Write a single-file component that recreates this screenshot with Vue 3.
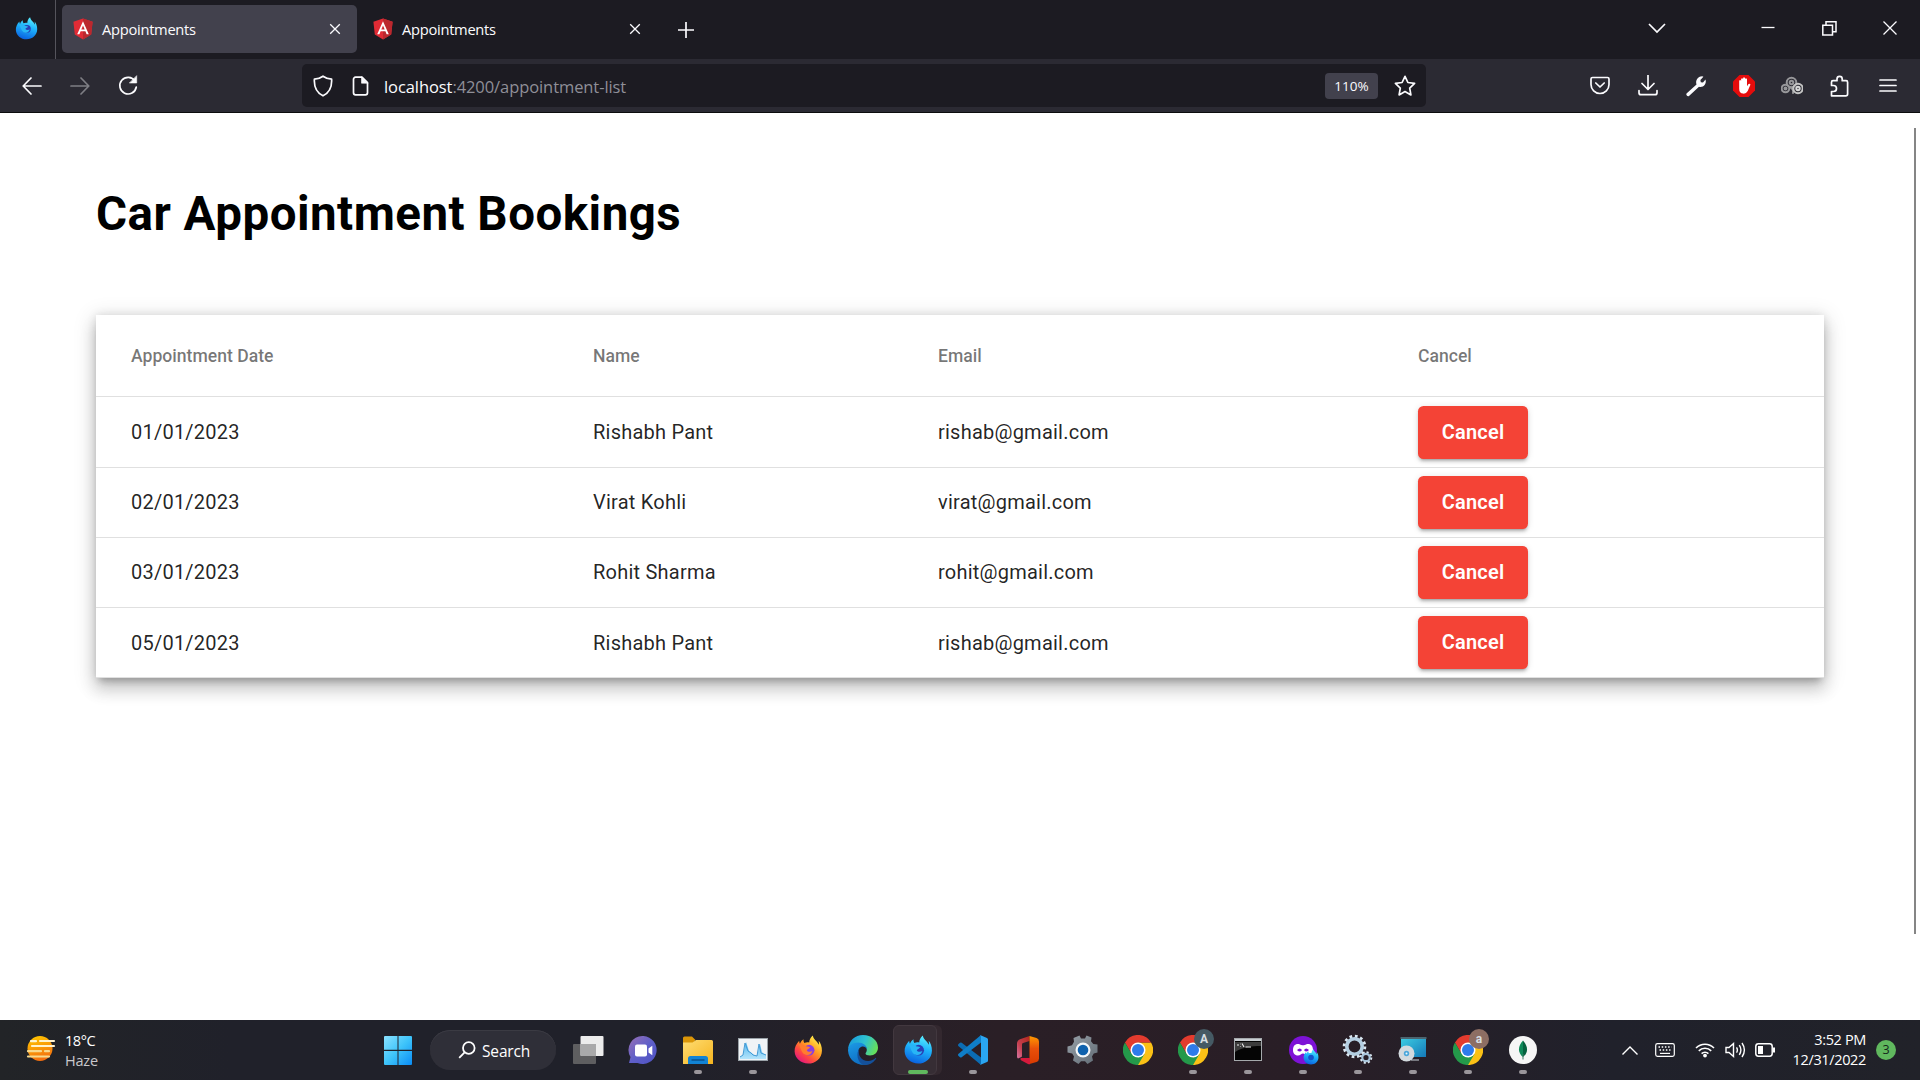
<script setup>
const tabs = [
  { title: 'Appointments', active: true },
  { title: 'Appointments', active: false },
]
const columns = ['Appointment Date', 'Name', 'Email', 'Cancel']
const bookings = [
  { date: '01/01/2023', name: 'Rishabh Pant', email: 'rishab@gmail.com' },
  { date: '02/01/2023', name: 'Virat Kohli', email: 'virat@gmail.com' },
  { date: '03/01/2023', name: 'Rohit Sharma', email: 'rohit@gmail.com' },
  { date: '05/01/2023', name: 'Rishabh Pant', email: 'rishab@gmail.com' },
]
</script>

<template>
  <div class="screen">
    <!-- shared gradients and symbols -->
    <svg class="defs" width="0" height="0" aria-hidden="true">
      <defs>
        <linearGradient id="ffb" x1="0.7" y1="0" x2="0.4" y2="1"><stop offset="0" stop-color="#5cf0ff" /><stop offset=".45" stop-color="#1fb4fb" /><stop offset="1" stop-color="#0a62e0" /></linearGradient>
        <linearGradient id="ffo" x1="0.85" y1="0.1" x2="0.2" y2="0.95"><stop offset="0" stop-color="#fff04a" /><stop offset=".4" stop-color="#ff9a22" /><stop offset=".7" stop-color="#ff4a40" /><stop offset="1" stop-color="#e3157f" /></linearGradient>
        <linearGradient id="win" x1="0" y1="0" x2="1" y2="1"><stop offset="0" stop-color="#8be2ff" /><stop offset=".5" stop-color="#3ec4fa" /><stop offset="1" stop-color="#0a8cf5" /></linearGradient>
        <linearGradient id="sun" x1="0.3" y1="0" x2="0.6" y2="1"><stop offset="0" stop-color="#ffc400" /><stop offset="1" stop-color="#f26a10" /></linearGradient>
        <linearGradient id="chat" x1="0" y1="0" x2="1" y2="1"><stop offset="0" stop-color="#9a70b4" /><stop offset=".5" stop-color="#5f5fc9" /><stop offset="1" stop-color="#4d52c4" /></linearGradient>
        <linearGradient id="fold" x1="0" y1="0" x2="1" y2="1"><stop offset="0" stop-color="#ffdd73" /><stop offset="1" stop-color="#f5b41f" /></linearGradient>
        <linearGradient id="edgeg" x1="0" y1="0.2" x2="1" y2="0.5"><stop offset="0" stop-color="#1799e0" /><stop offset=".55" stop-color="#2fc2cf" /><stop offset="1" stop-color="#66e05a" /></linearGradient>
        <linearGradient id="edgeb" x1="0" y1="0" x2="0.4" y2="1"><stop offset="0" stop-color="#1c9be6" /><stop offset="1" stop-color="#0f6fc4" /></linearGradient>
        <linearGradient id="off" x1="1" y1="0" x2="0" y2="1"><stop offset="0" stop-color="#b3261c" /><stop offset=".6" stop-color="#c7404f" /><stop offset="1" stop-color="#d777a5" /></linearGradient>
        <linearGradient id="offr" x1="0" y1="0" x2="0" y2="1"><stop offset="0" stop-color="#ff9a00" /><stop offset=".45" stop-color="#e8500a" /><stop offset="1" stop-color="#d83b01" /></linearGradient>
        <linearGradient id="tv" x1="0" y1="0" x2="1" y2="1"><stop offset="0" stop-color="#3fd0e4" /><stop offset="1" stop-color="#1479b8" /></linearGradient>
        <linearGradient id="cog" x1="0" y1="0" x2="1" y2="1"><stop offset="0" stop-color="#97a0a8" /><stop offset="1" stop-color="#616b74" /></linearGradient>
        <linearGradient id="perf" x1="0" y1="0" x2="0" y2="1"><stop offset="0" stop-color="#4cb4ee" /><stop offset="1" stop-color="#b4e4fb" /></linearGradient>
        <symbol id="fox" viewBox="0 0 32 32">
          <path d="M21 .5c-2.500 1.800-3.800 4.800-3.900 7.700-2-.4-3.700-.2-5.300.5C11 7.300 10.600 5.900 10.800 4.500 9 5.700 7.800 7.400 7 9.600 6.400 8.500 6.100 7.300 6.200 6.200 3 9.500 1 13.500 1.200 18 1.600 25.500 8 31 16 31s14.800-5.700 14.900-14c.1-4.500-1.500-8.700-3.600-10.800.4 1.400.5 3.200.2 4.500C25.800 6.500 21.700 5 21 .5z" />
        </symbol>
        <symbol id="chrome" viewBox="0 0 32 32">
          <path d="M16 16V8h13.860A16 16 0 0 1 16 32z" fill="#fbc116" />
          <path d="M2.140 8A16 16 0 0 1 29.860 8H16L9 20z" fill="#e33b2e" />
          <path d="M2.140 8l7 12L16 24l7-4-7 12A16 16 0 0 1 2.140 8z" fill="#24994a" />
          <circle cx="16" cy="16" r="8" fill="#fff" /><circle cx="16" cy="16" r="6.400" fill="#2f7bea" />
        </symbol>
        <symbol id="angular" viewBox="0 0 20 22">
          <path d="M10 .5 19.600 3.800 18.200 16.600 10 21.500 1.800 16.600.4 3.800z" fill="#e02b35" />
          <path d="M10 .5 19.600 3.800 18.200 16.600 10 21.500z" fill="#bb282e" />
          <path d="M10 3.200 4.200 16.300h2.200l1.200-3h4.800l1.200 3h2.200zm0 4.200 1.700 4.100H8.300z" fill="#fff" fill-rule="evenodd" />
        </symbol>
      </defs>
    </svg>

    <header class="tabbar">
      <div class="ffview">
        <svg width="23" height="23" viewBox="0 0 32 32"><use href="#fox" fill="url(#ffb)" /><circle cx="16.500" cy="16.500" r="5.500" fill="#2a3fb4" /><path d="M6 10c4 .3 6 1 8.500 2.500 1.500 0 3 .2 3.500 1-1 1.500-3 1.500-3.500 3 .5 2 4 2 6 1-1 3.500-4 5-7 4-4-1-5-5-7.500-11.500z" fill="#28b6f6" /></svg>
      </div>
      <div v-for="(tab, i) in tabs" :key="i" class="tab" :class="{ active: tab.active }">
        <svg class="favicon" width="20" height="22"><use href="#angular" /></svg>
        <span class="tabtitle">{{ tab.title }}</span>
        <svg class="close" width="12" height="12" viewBox="0 0 12 12"><path d="M1.200 1.200l9.600 9.600M10.800 1.200l-9.600 9.600" /></svg>
      </div>
      <svg class="plus" width="16" height="16" viewBox="0 0 16 16"><path d="M8 0v16M0 8h16" /></svg>
      <div class="winctl">
        <svg width="18" height="12" viewBox="0 0 18 12"><path d="M1 2l8 8 8-8" stroke-width="1.700" /></svg>
        <svg class="min" width="14" height="14" viewBox="0 0 14 14"><path d="M0.500 6.500h13" /></svg>
        <svg class="res" width="15" height="15" viewBox="0 0 15 15"><path d="M.8 4.200h9.700v9.700H.8zM4 4V.8h10v10h-3.500" stroke-width="1.500" /></svg>
        <svg width="14" height="14" viewBox="0 0 14 14"><path d="M.5.5l13 13M13.500.5l-13 13" stroke-width="1.300" /></svg>
      </div>
    </header>

    <nav class="toolbar">
      <svg class="back" width="20" height="18" viewBox="0 0 20 18"><path d="M19 9H1.500M9 1L1.200 9 9 17" /></svg>
      <svg class="fwd" width="20" height="18" viewBox="0 0 20 18"><path d="M1 9h17.500M11 1l7.800 8-7.800 8" /></svg>
      <svg class="reload" width="20" height="21" viewBox="0 0 20 21"><path d="M17 6A8.300 8.300 0 1 0 18.300 12" /><path d="M18.700 1v7h-7z" class="solid" /></svg>
      <div class="urlbar">
        <svg class="shield" width="20" height="22" viewBox="0 0 20 22"><path d="M10 1.200c2.600 1.900 5.600 2.800 8.600 2.900.5 7.500-2.600 13.700-8.600 16.700C4 17.800.9 11.600 1.400 4.100 4.400 4 7.400 3.100 10 1.200z" /></svg>
        <svg class="doc" width="17" height="20" viewBox="0 0 17 20"><path d="M1.500 3.200a2 2 0 0 1 2-2H10L15.500 6.700v10.100a2 2 0 0 1-2 2h-10a2 2 0 0 1-2-2z" /><path d="M9.500 1v6.200h6.200z" class="solid" /></svg>
        <span class="url">localhost<span class="dim">:4200/appointment-list</span></span>
        <span class="zoom">110%</span>
        <svg class="star" width="22" height="22" viewBox="0 0 22 22"><path d="M11 1.300l2.900 6.200 6.700.9-4.900 4.700 1.200 6.800L11 16.600l-5.900 3.300 1.200-6.800L1.400 8.400l6.700-.9z" /></svg>
      </div>
      <div class="actions">
        <svg viewBox="0 0 22 22"><path d="M3.500 2.500h15a1.500 1.500 0 0 1 1.500 1.500v5.500a9 9 0 0 1-18 0V4a1.500 1.500 0 0 1 1.500-1.500zM6.800 8l4.200 4 4.200-4" /></svg>
        <svg viewBox="0 0 22 22"><path d="M11 0v14M5 8.500l6 6 6-6M2 15.500v2.200a2 2 0 0 0 2 2h14a2 2 0 0 0 2-2v-2.200" /></svg>
        <svg viewBox="0 0 22 22"><path class="wrench" d="M1.500 18.500 11.500 9.500C10.300 5.500 12.500 1.500 17.200 1.300l1.200.4-3 3.300.4 2.200 2.200.4 2.500-3.200c1.500 4.500-2.300 8.400-6.500 7.300L4 21c-1.300.9-3.400-1-2.500-2.500z" /></svg>
        <svg viewBox="0 0 22 22"><path d="M6.500 0h9L22 6.500v9L15.500 22h-9L0 15.500v-9z" fill="#e50c0c" stroke="none" /><path d="M6.200 9V5.700q.8-1.500 1.900 0V3.900q.9-1.500 2 0V3q.9-1.500 1.900 0v1q.9-1.500 2 0v7.200l1.500-2.300q1.800-.7 1.900.8l-2.700 6.300q-1.500 2.900-4.600 2.600-3.900-.3-3.900-4.900z" fill="#fff" stroke="none" /></svg>
        <svg viewBox="0 0 22 22" class="rings"><circle cx="4.500" cy="13.500" r="3.800" /><circle cx="4.500" cy="13.500" r="1" /><circle cx="10.500" cy="7.500" r="4.800" /><circle cx="10.500" cy="7.500" r="1.800" /><path d="M9 12q4 2 3 6" /><circle cx="17" cy="13.500" r="4.700" stroke="#c4c4c4" /><circle cx="17" cy="13.500" r="1.700" stroke="#d8d8d8" /></svg>
        <svg viewBox="0 0 22 22"><path d="M2.500 10.500V7.200a1.500 1.500 0 0 1 1.500-1.500h4V4a2.600 2.600 0 0 1 5.200 0v1.700h3.900a1.500 1.500 0 0 1 1.500 1.500V19a1.800 1.800 0 0 1-1.800 1.800H2.500v-4.300h2a3 3 0 0 0 0-6z" /></svg>
        <svg viewBox="0 0 22 22"><path d="M3 5h16M3 10.500h16M3 16h16" /></svg>
      </div>
    </nav>

    <main class="page">
      <h1>Car Appointment Bookings</h1>
      <section class="card">
        <div class="row head">
          <span v-for="c in columns" :key="c">{{ c }}</span>
        </div>
        <div v-for="b in bookings" :key="b.date" class="row">
          <span>{{ b.date }}</span>
          <span>{{ b.name }}</span>
          <span>{{ b.email }}</span>
          <span class="action"><button type="button">Cancel</button></span>
        </div>
      </section>
      <div class="scrollbar"></div>
    </main>

    <footer class="taskbar">
      <div class="weather">
        <svg width="30" height="28" viewBox="0 0 30 28"><circle cx="14" cy="13.500" r="12.500" fill="url(#sun)" /><path d="M5 6.200h5M14 6h14M6 11h22" stroke="#fff3cf" stroke-width="2.200" stroke-linecap="round" /><path d="M2 16.200h13M19 16.200h4M2 21.500h21" stroke="#f8d98c" stroke-width="2.200" stroke-linecap="round" /></svg>
        <div class="wtext"><span>18°C</span><span class="haze">Haze</span></div>
      </div>

      <svg class="start" width="28" height="29" viewBox="0 0 28 29"><path d="M1 0h12.500v13.800H0V1a1 1 0 0 1 1-1zM14.500 0H27a1 1 0 0 1 1 1v12.800H14.500zM0 15h13.500v14H1a1 1 0 0 1-1-1zM14.500 15H28v13a1 1 0 0 1-1 1H14.500z" fill="url(#win)" /></svg>
      <div class="search">
        <svg width="18" height="18" viewBox="0 0 18 18"><circle cx="10.800" cy="7" r="5.800" /><path d="M6.600 11.300L1.200 16.800" /></svg>
        <span>Search</span>
      </div>

      <div class="apps">
        <div class="app"><svg viewBox="0 0 32 32"><rect x="1" y="10" width="23" height="20" rx="1" fill="#5e5e60" /><rect x="8.500" y="2" width="23" height="20" rx="1" fill="#ececec" /><path d="M8.500 10H24v12H9.500a1 1 0 0 1-1-1z" fill="#a9a9aa" /></svg></div>
        <div class="app"><svg viewBox="0 0 32 32"><path d="M16.500 2a14 14 0 1 1-6 27H2l1.500-6A14 14 0 0 1 16.500 2z" fill="url(#chat)" /><rect x="8" y="10.500" width="12" height="12" rx="2" fill="#fff" /><path d="M21.500 14.500l3.800-2.700v9.400l-3.800-2.700z" fill="#fff" /></svg></div>
        <div class="app run"><svg viewBox="0 0 32 32"><path d="M1 4a1.500 1.500 0 0 1 1.500-1.500H10L13.500 6l-3 4H1z" fill="#db9608" /><path d="M1 8.500h9.500L14 6h15.500A1.500 1.500 0 0 1 31 7.500V30H1z" fill="url(#fold)" /><path d="M6 30v-5.500A2.500 2.500 0 0 1 8.500 22h15a2.500 2.500 0 0 1 2.500 2.500V30z" fill="#1283d4" /><path d="M9.500 26h13" stroke="#0a508c" stroke-width="1.500" /></svg></div>
        <div class="app run"><svg viewBox="0 0 32 32"><rect x="1.500" y="4.500" width="29" height="22" fill="#f0f3f6" stroke="#9aa2a8" /><path d="M3 25v-2l3-2 3-13 3 9 3 2 2 2 3 1 3-12 2 8 2 2 2 1v4z" fill="url(#perf)" /><path d="M3 23l3-2 2-12 3 8 3 2 2 2 4 1 2-12 2 9 5 2" fill="none" stroke="#4199d4" /></svg></div>
        <div class="app"><svg viewBox="0 0 32 32"><g transform="translate(1.500 1) scale(.92)"><use href="#fox" width="32" height="32" fill="url(#ffo)" /><circle cx="17" cy="16.500" r="5.800" fill="#8a3fe0" /><path d="M6 10c4 .3 6 1 8.500 2.500 1.500 0 3 .2 3.500 1-1 1.500-3 1.500-3.500 3 .5 2 4 2 6 1-1 3.500-4 5-7 4-4-1-5-5-7.500-11.500z" fill="#ff7d2e" /></g></svg></div>
        <div class="app"><svg viewBox="0 0 32 32"><path d="M1 15C2 6.500 8 1 16 1c8.500 0 15 5.500 15 12.500 0 5-3.700 8-8 8-3 0-4.500-1-4.500-2 0-.8 1.300-1.500 1.300-3.800 0-3.500-3.400-5.700-7.300-5.700C7 10 2.500 12 1 15z" fill="url(#edgeg)" /><path d="M1 16.500C1 11.500 5.500 8.500 11 8.500c5 0 9 3 9 7 0 0-1-3-4-3-3.500 0-5.500 3.500-4.500 8 1 5 5 9 9.500 9.500A15 15 0 0 1 1 16.500z" fill="url(#edgeb)" /><path d="M12.500 14.500c-3 6.500 3 13.500 9.500 12.500 3-.4 5.500-1.800 6.800-3.300.7.200.4 1-.3 1.800C25.500 29.500 21 31.500 17 31 10.500 29.500 8.500 19 12.500 14.500z" fill="#14509a" /></svg></div>
        <div class="app current"><svg viewBox="0 0 32 32"><g transform="translate(1.500 1) scale(.92)"><use href="#fox" width="32" height="32" fill="url(#ffb)" /><circle cx="16.500" cy="16.500" r="5.800" fill="#2a3fb4" /><path d="M6 10c4 .3 6 1 8.500 2.500 1.500 0 3 .2 3.500 1-1 1.500-3 1.500-3.500 3 .5 2 4 2 6 1-1 3.500-4 5-7 4-4-1-5-5-7.500-11.500z" fill="#28b6f6" /></g></svg></div>
        <div class="app run"><svg viewBox="0 0 32 32"><path d="M1.300 10.300 3 8.800q.8-.6 1.700 0L24 23.500V31L1.300 11.900q-.7-.8 0-1.600z" fill="#0b6cb3" /><path d="M1.300 21.700 3 23.200q.8.600 1.700 0L24 8.500V1L1.300 20.100q-.7.800 0 1.600z" fill="#0f7ec8" /><path d="M23 1l7 3q1 .5 1 1.500v21q0 1-1 1.500l-7 3q1-.5 1-2V3q0-1.500-1-2z" fill="#2aa6f2" /></svg></div>
        <div class="app"><svg viewBox="0 0 32 32"><path d="M17.500 2 8 5.200Q5 6.500 5 9.500v13q0 1.500 1 2l3.500-1.500q.5-.4.500-1.500V10.500q0-1.200 1-1.600L17.500 7z" fill="url(#off)" /><path d="M17.500 2l7 2q2.500.8 2.500 3.500v17q0 2.500-2.500 3.500l-7 2z" fill="url(#offr)" /><path d="M9 24h9v6.200q-1 .2-2-.3L9 26.200q-1.500-1.500 0-2.200z" fill="#d61a3c" /></svg></div>
        <div class="app"><svg viewBox="0 0 32 32"><path d="M12.500 1.500 14 4.500h4l1.500-3 5 2-.5 3.800 2.300 2.700 4.200.5v8l-3.700.9-1.800 3.100 1 4-5.500 3.500L18 27.300h-4L11.500 30 6 26.500l1-4-1.800-3.100-4.700-1v-5.800L5 11.300l2-3.500-.5-3.800z" fill="url(#cog)" /><circle cx="16" cy="16" r="7.500" fill="#f4f7f9" /><circle cx="16" cy="16" r="5.300" fill="#0f62ae" /></svg></div>
        <div class="app"><svg viewBox="-1 -1 34 34"><use href="#chrome" width="32" height="32" /></svg></div>
        <div class="app run"><svg viewBox="-1 -1 34 34"><use href="#chrome" width="32" height="32" /></svg><span class="badge slate">A</span></div>
        <div class="app run"><svg viewBox="0 0 32 32"><rect x="2.500" y="4.500" width="27" height="22" fill="#050505" stroke="#a5a9ac" /><path d="M3 5h26v2H3z" fill="#c9ced2" /><path d="M3 8h26v4c-10 0-18 1-26 6z" fill="#3c3c3c" /><path d="M5 11h2M8.500 9.800v.5M8.500 12.500v.5M10 9.500l2 3.500M13.500 13H19" stroke="#eee" stroke-width="1.100" /></svg></div>
        <div class="app run"><svg viewBox="0 0 32 32"><circle cx="16" cy="16" r="14" fill="#7d12d6" /><path d="M6 16c0-5.500 4-6.500 6.500-5.700 1.500.6 2.200 1 3.500 1s2-.4 3.500-1c2.500-.8 6.500.2 6.500 5.700 0 4-2.500 5.500-5 5.500-2.200 0-3.500-2-5-2s-2.800 2-5 2c-2.500 0-5-1.500-5-5.500zm4 0q3-3 5 0-2 3-5 0zm7 0q2-3 5 0-3 3-5 0z" fill="#fff" fill-rule="evenodd" /><use href="#fox" x="16" y="15" width="16" height="16" fill="url(#ffb)" /><circle cx="24" cy="23.500" r="2.800" fill="#1552cc" /></svg></div>
        <div class="app run"><svg viewBox="0 0 32 32"><circle cx="12.500" cy="12.500" r="10.300" fill="none" stroke="#dbe8f2" stroke-width="3" stroke-dasharray="2.700 2.700" /><circle cx="12.500" cy="12.500" r="7.700" fill="none" stroke="#b4cfe2" stroke-width="3.600" /><circle cx="24" cy="23.500" r="5.300" fill="none" stroke="#dbe8f2" stroke-width="2" stroke-dasharray="2.100 2.050" /><circle cx="24" cy="23.500" r="3.700" fill="none" stroke="#a9c6dc" stroke-width="2.200" /></svg></div>
        <div class="app run"><svg viewBox="0 0 32 32"><rect x="4" y="3" width="25" height="20" fill="url(#tv)" /><path d="M3.500 3h26v2h-26z" fill="#4b6570" /><path d="M14 25.500h8v1h-8z" fill="#c9d2d8" /><circle cx="9.500" cy="19.500" r="8" fill="#d3dade" /><circle cx="9.500" cy="19.500" r="2.700" fill="#4ca7da" /><circle cx="9.500" cy="19.500" r="1" fill="#e9f6fd" /></svg></div>
        <div class="app run"><svg viewBox="-1 -1 34 34"><use href="#chrome" width="32" height="32" /></svg><span class="badge brown">a</span></div>
        <div class="app run"><svg viewBox="0 0 32 32"><circle cx="16" cy="16" r="14" fill="#f6f6f6" /><path d="M16 6.500c-5.500 6-5.300 12.500 0 16.500z" fill="#0f8a5a" /><path d="M16 6.500c5.500 6 5.300 12.500 0 16.500z" fill="#06613f" /><path d="M16 20v5.500" stroke="#3c7d63" /></svg></div>
      </div>

      <div class="tray">
        <svg width="18" height="11" viewBox="0 0 18 11"><path d="M1.500 9.500L9 2l7.500 7.500" /></svg>
        <svg class="kb" width="20" height="14" viewBox="0 0 20 14"><rect x=".7" y=".7" width="18.600" height="12.600" rx="1.800" stroke-width="1.200" /><path d="M3.500 4h13M4.500 7h11" stroke-dasharray="1.500 1.700" /><path d="M5 10.400h10" stroke-width="1.200" /></svg>
        <svg class="wifi" width="20" height="16" viewBox="0 0 20 16"><path d="M1 6a12.700 12.700 0 0 1 18 0M3.800 8.900a8.700 8.700 0 0 1 12.400 0M6.600 11.600a4.800 4.800 0 0 1 6.800 0" stroke-width="1.600" /><circle cx="10" cy="13.600" r="1.900" fill="#fff" stroke="none" /></svg>
        <svg class="vol" width="21" height="18" viewBox="0 0 21 18"><path d="M1 6.500h3L8.500 2.500v13L4 11.500H1zM11.500 6.300q1.800 2.700 0 5.400M14.300 4.200q3.200 4.800 0 9.600M17 2q4.800 7 0 14" /></svg>
        <svg class="bat" width="21" height="14" viewBox="0 0 21 14"><rect x=".8" y=".8" width="16.400" height="12.400" rx="2.600" stroke-width="1.500" /><path d="M3 3h5v8H3z" fill="#fff" stroke="none" /><path d="M18 4.500h2v5h-2z" fill="#fff" stroke="none" /></svg>
        <div class="clock"><span>3:52 PM</span><span>12/31/2022</span></div>
        <span class="count">3</span>
      </div>
    </footer>
  </div>
</template>

<style>
html, body { margin: 0; background: #fff; overflow: hidden; }
</style>

<style scoped>
.screen { width: 1920px; height: 1080px; display: flex; flex-direction: column; overflow: hidden; background: #fff; font-family: "Open Sans", "Noto Sans", sans-serif; }
.defs { position: absolute; }
svg { flex: none; display: block; }

/* tab strip */
.tabbar { height: 59px; flex: none; display: flex; align-items: center; background: #1c1b22; color: #fbfbfe; }
.ffview { width: 56px; height: 59px; box-sizing: border-box; border-right: 1px solid #55545c; padding: 0 0 3px 15px; display: flex; align-items: center; margin-right: 6px; }
.tab { width: 295px; height: 48px; margin: 0 5px 1px 0; border-radius: 5px; display: flex; align-items: center; box-sizing: border-box; padding: 0 16px 0 11px; }
.tab.active { background: #42414d; }
.tabtitle { margin-left: 9px; flex: 1; font-size: 14.700px; letter-spacing: -0.280px; line-height: 20px; }
.tabbar .close, .plus, .winctl svg { fill: none; stroke: #fbfbfe; stroke-width: 1.300; }
.plus { margin-left: 16px; stroke-width: 1.700; }
.winctl { margin-left: auto; display: flex; align-items: center; padding-right: 23px; height: 56px; align-self: flex-start; }
.winctl .min { margin-left: 95px; }
.winctl .res { margin: 0 46px 0 47px; }

/* navigation */
.toolbar { height: 54px; box-sizing: border-box; flex: none; display: flex; align-items: center; background: #2b2a33; border-bottom: 1px solid #0c0c0d; padding: 0 21px 0 22px; }
.toolbar svg { fill: none; stroke: #fbfbfe; stroke-width: 1.700; stroke-linejoin: round; stroke-linecap: round; }
.toolbar svg .solid { fill: #fbfbfe; stroke-width: 0.600; }
.toolbar svg .wrench { fill: #fbfbfe; stroke: none; }
.toolbar .fwd { margin-left: 28px; opacity: 0.400; }
.toolbar .reload { margin-left: 28px; }
.urlbar { margin-left: 164px; width: 1124px; height: 43px; background: #1c1b22; border-radius: 5px; display: flex; align-items: center; box-sizing: border-box; padding: 0 10px 0 11px; }
.doc { margin-left: 19px; }
.url { margin-left: 15px; flex: 1; color: #fbfbfe; font-size: 16.500px; letter-spacing: -0.080px; line-height: 22px; padding-top: 2px; }
.dim { color: #8f8f98; }
.zoom { width: 53px; height: 26px; line-height: 27px; border-radius: 4px; background: #42414d; color: #fbfbfe; font-size: 13.500px; text-align: center; margin-right: 16px; }
.actions { margin-left: auto; display: flex; gap: 26px; }
.actions svg { width: 22px; height: 22px; }
.actions .rings { stroke: #97979a; stroke-width: 2; }

/* page */
.page { position: relative; flex: 1; padding: 0 96px; font-family: Roboto, sans-serif; }
h1 { margin: 71px 0 101px; height: 30px; line-height: 60px; font-size: 47.500px; font-weight: 700; letter-spacing: 0.480px; color: #000; white-space: nowrap; }
.card { background: #fff; box-shadow: 0 7px 7px -4px rgba(0, 0, 0, 0.2), 0 12px 15px 1px rgba(0, 0, 0, 0.14), 0 4px 20px 3px rgba(0, 0, 0, 0.12), 0 0 9px rgba(0, 0, 0, 0.1); }
.row { display: grid; grid-template-columns: 462px 345px 480px 1fr; align-items: center; height: 70px; box-sizing: border-box; padding-left: 35px; border-bottom: 1px solid #e0e0e0; font-size: 20px; line-height: 24px; letter-spacing: 0.230px; color: rgba(0, 0, 0, 0.87); }
.row.head { height: 82px; font-size: 17.600px; font-weight: 500; letter-spacing: 0; color: rgba(0, 0, 0, 0.54); }
.head + .row { height: 71px; }
.row:nth-child(3) > span:not(.action), .row:nth-child(4) > span:not(.action) { padding-bottom: 2px; }
.row:nth-child(n + 3) button { padding-bottom: 2px; }
.action { display: flex; }
button { width: 110px; height: 53px; border: 0; padding: 0; border-radius: 5.500px; background: #f44336; color: #fff; font: 600 20px/24px Roboto, sans-serif; letter-spacing: 0.200px; box-shadow: 0 4px 2px -3px rgba(0, 0, 0, 0.2), 0 3px 3px rgba(0, 0, 0, 0.14), 0 1px 7px rgba(0, 0, 0, 0.12); }
.scrollbar { position: absolute; right: 4px; top: 15px; width: 2px; height: 806px; background: #858585; }

/* taskbar */
.taskbar { height: 60px; flex: none; display: flex; align-items: center; color: #fff; background: linear-gradient(90deg, #222427 0, #20212a 12%, #20212a 35%, #2a1f26 52%, #291e26 68%, #20212b 84%, #212229 100%); }
.weather { display: flex; align-items: center; width: 384px; box-sizing: border-box; padding-left: 26px; }
.weather svg { margin-bottom: 2px; }
.wtext { display: flex; flex-direction: column; margin: 1px 0 0 9px; font-size: 14.500px; line-height: 20px; letter-spacing: -0.450px; }
.haze { color: #c9c9cc; letter-spacing: -0.200px; }
.search { width: 126px; height: 40px; margin-left: 18px; border-radius: 20px; background: #2f2f38; box-shadow: inset 0 1px #3b3b43; display: flex; align-items: center; box-sizing: border-box; padding-left: 28px; font-size: 15.500px; letter-spacing: -0.150px; }
.search svg { fill: none; stroke: #fff; stroke-width: 1.800; margin-right: 6px; }
.search span { padding-top: 2px; }
.apps { display: flex; margin-left: 4px; }
.app { position: relative; width: 55px; height: 60px; display: flex; align-items: center; justify-content: center; }
.app svg { width: 32px; height: 32px; position: relative; }
.app.run::after, .app.current::after { content: ""; position: absolute; left: 24px; bottom: 6px; width: 8px; height: 4px; border-radius: 2px; background: #9a969b; }
.app.current::after { left: 18px; width: 20px; background: #60b85e; }
.app.current::before { content: ""; position: absolute; left: 3px; top: 5px; width: 44px; height: 50px; box-sizing: border-box; border-radius: 6px; border: 1px solid #42383f; background: #362d34; box-shadow: 5px 0 0 #33282f; }
.badge { position: absolute; left: 29px; top: 9px; width: 20px; height: 20px; border-radius: 50%; font: 700 12px/20px Roboto, sans-serif; text-align: center; color: #d7dee2; }
.slate { background: #455a64; }
.brown { background: #8d6e63; }
.tray { margin-left: auto; display: flex; align-items: center; padding-right: 24px; }
.tray svg { fill: none; stroke: #fff; stroke-width: 1.400; }
.tray .kb { margin-left: 16px; }
.tray .wifi { margin-left: 20px; }
.tray .vol { margin-left: 10px; }
.tray .bat { margin-left: 9px; }
.clock { width: 90px; display: flex; flex-direction: column; text-align: right; font-size: 14.500px; letter-spacing: -0.350px; line-height: 20px; margin-bottom: 1px; }
.count { width: 20px; height: 20px; margin-left: 10px; border-radius: 50%; background: #60b85e; color: #14261a; font-size: 12.500px; line-height: 20px; text-align: center; }
</style>
